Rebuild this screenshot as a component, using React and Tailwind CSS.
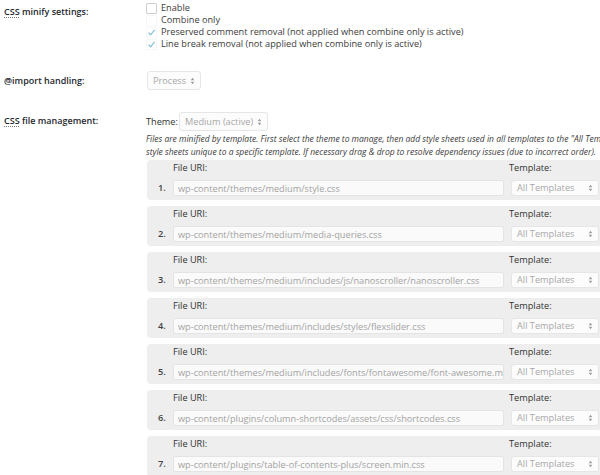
import React from 'react';

const font = { fontFamily: '"Open Sans", "Liberation Sans", sans-serif' };

const files = [
  'wp-content/themes/medium/style.css',
  'wp-content/themes/medium/media-queries.css',
  'wp-content/themes/medium/includes/js/nanoscroller/nanoscroller.css',
  'wp-content/themes/medium/includes/styles/flexslider.css',
  'wp-content/themes/medium/includes/fonts/fontawesome/font-awesome.min.css',
  'wp-content/plugins/column-shortcodes/assets/css/shortcodes.css',
  'wp-content/plugins/table-of-contents-plus/screen.min.css',
];

const Arrows = () => (
  <svg width="5" height="8" viewBox="0 0 5 8" className="shrink-0">
    <path d="M2.5 0.8 L4.3 3.2 L0.7 3.2 Z" fill="#9a9a9a" />
    <path d="M2.5 7.2 L4.3 4.8 L0.7 4.8 Z" fill="#9a9a9a" />
  </svg>
);

const Select = ({ label, className }) => (
  <div className={`flex items-center justify-between rounded-[3px] border border-[#e6e6e6] bg-[#fcfcfc] pl-[5px] pr-[5px] text-[#a8a8a8] ${className}`}>
    <span className="whitespace-nowrap">{label}</span>
    <Arrows />
  </div>
);

const Check = ({ checked, visible = true }) => (
  <span className={`flex h-[11px] w-[11px] shrink-0 items-center justify-center rounded-[1px] border ${visible ? 'border-[#cfcfcf]' : 'border-[#f6f6f6]'} bg-white`}>
    {checked ? (
      <svg width="9" height="9" viewBox="0 0 9 9">
        <path d="M1.5 4.8 L3.6 6.8 L7.6 1.8" fill="none" stroke="#8bc2dc" strokeWidth="1.3" />
      </svg>
    ) : null}
  </span>
);

const Abbr = () => <span className="underline decoration-dotted decoration-[#777] underline-offset-[2px]">CSS</span>;

const FileRow = ({ n, uri }) => (
  <div className="mb-[6px] h-[40px] w-[470px] rounded-[4px] bg-[#eeeeee] pl-[11px] pt-[1px]">
    <div className="flex h-[13px] items-center">
      <span className="w-[351px] shrink-0 pl-[15px] leading-[13px] text-[#333]">File URI:</span>
      <span className="leading-[13px] text-[#333]">Template:</span>
    </div>
    <div className="mt-[6px] flex h-[16px] items-center">
      <span className="w-[15px] shrink-0 font-semibold text-[#444]">{n}.</span>
      <input
        readOnly
        value={uri}
        className="h-[16px] w-[331px] shrink-0 rounded-[2px] border border-[#e4e4e4] bg-[#fafafa] pl-[4px] text-[9.2px] text-[#a3a3a3] outline-none"
        style={font}
      />
      <Select label="All Templates" className="ml-[7px] h-[16px] w-[88px] shrink-0" />
    </div>
  </div>
);

export default function App() {
  return (
    <div className="h-[475px] w-[600px] overflow-hidden bg-white text-[9.2px] text-[#3c3c3c]" style={font}>
      <div className="flex pt-[2px]">
        <div className="w-[146px] shrink-0 pl-[4px] pt-[4px] text-[9px] font-semibold leading-[12px] text-[#23282d]">
          <Abbr /> minify settings:
        </div>
        <div className="flex flex-col leading-[12px]">
          <label className="flex h-[12px] items-center gap-[4px]"><Check /><span>Enable</span></label>
          <label className="flex h-[12px] items-center gap-[4px]"><Check visible={false} /><span>Combine only</span></label>
          <label className="flex h-[12px] items-center gap-[4px]"><Check checked visible={false} /><span>Preserved comment removal (not applied when combine only is active)</span></label>
          <label className="flex h-[12px] items-center gap-[4px]"><Check checked visible={false} /><span>Line break removal (not applied when combine only is active)</span></label>
        </div>
      </div>

      <div className="mt-[21px] flex items-center">
        <div className="w-[146px] shrink-0 pl-[4px] text-[9px] font-semibold text-[#23282d]">@import handling:</div>
        <Select label="Process" className="ml-[1px] h-[19px] w-[54px]" />
      </div>

      <div className="mt-[22px] flex">
        <div className="w-[146px] shrink-0 pl-[4px] pt-[3px] text-[9px] font-semibold leading-[12px] text-[#23282d]">
          <Abbr /> file management:
        </div>
        <div className="flex flex-col">
          <div className="flex h-[19px] items-center">
            <span className="w-[33px] text-[#333]">Theme:</span>
            <Select label="Medium (active)" className="h-[19px] w-[89px]" />
          </div>
          <div className="whitespace-nowrap pt-[1px] text-[8.5px] italic leading-[13px] text-[#3a3a3a]">
            Files are minified by template. First select the theme to manage, then add style sheets used in all templates to the "All Templates" template and add
            <br />
            style sheets unique to a specific template. If necessary drag &amp; drop to resolve dependency issues (due to incorrect order).
          </div>
          <div className="ml-[1px] mt-[2px]">
            {files.map((f, i) => (
              <FileRow key={f} n={i + 1} uri={f} />
            ))}
          </div>
        </div>
      </div>
    </div>
  );
}
